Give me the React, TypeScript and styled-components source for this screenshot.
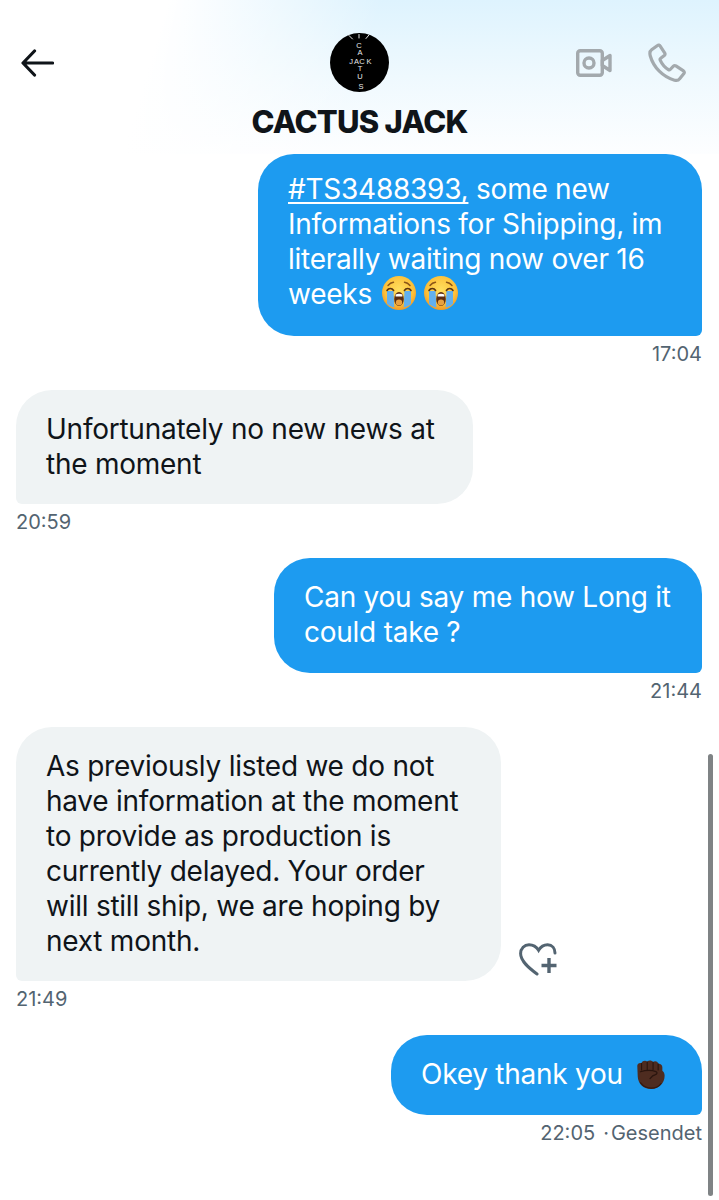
import React from 'react';
import styled, { createGlobalStyle } from 'styled-components';

const GlobalStyle = createGlobalStyle`
  html, body {
    margin: 0;
    padding: 0;
    background: #fff;
  }
  * {
    box-sizing: border-box;
  }
`;

const Screen = styled.div`
  position: relative;
  width: 719px;
  height: 1200px;
  overflow: hidden;
  background: #fff;
  font-family: Inter, 'Noto Sans', sans-serif;
  color: #0f1419;
`;

const Header = styled.header`
  height: 154px;
  display: grid;
  grid-template-columns: 1fr auto 1fr;
  padding: 33px 21px 0;
  background:
    linear-gradient(107deg, #ffffff 22%, rgba(255, 255, 255, 0) 50%),
    linear-gradient(180deg, #def3fe 0%, #eff9fe 50%, #fdfeff 100%);
`;

const BackButton = styled.div`
  height: 59px;
  display: flex;
  align-items: center;
`;

const Profile = styled.div`
  display: flex;
  flex-direction: column;
  align-items: center;
`;

const Avatar = styled.svg`
  width: 59px;
  height: 59px;
  display: block;
`;

const Name = styled.h1`
  margin: 11px 0 0;
  font-size: 31px;
  line-height: 38px;
  font-weight: 800;
  letter-spacing: -0.75px;
  white-space: nowrap;
  color: #0f1419;
`;

const Actions = styled.div`
  height: 59px;
  display: flex;
  align-items: center;
  justify-content: flex-end;
  gap: 36px;
  padding-right: 12px;
`;

const Thread = styled.main`
  display: flex;
  flex-direction: column;
  padding: 0 17px 0 16px;
`;

const Group = styled.section<{ $mine?: boolean }>`
  display: flex;
  flex-direction: column;
  align-items: ${(p) => (p.$mine ? 'flex-end' : 'flex-start')};
  margin-bottom: 24px;
`;

const BubbleRow = styled.div`
  display: flex;
  align-items: flex-end;
`;

const Bubble = styled.div<{ $mine?: boolean; $clipped?: boolean; $narrow?: boolean; $width: number }>`
  width: ${(p) => p.$width}px;
  padding: ${(p) => (p.$clipped ? '17.5px' : '22px')} ${(p) => (p.$narrow ? '36px' : '20px')}
    ${(p) => (p.$clipped ? '24px' : '22.5px')} 30px;
  font-size: 28px;
  line-height: 35px;
  letter-spacing: -0.25px;
  border-radius: ${(p) => (p.$mine ? '36px 36px 6px 36px' : '36px 36px 36px 6px')};
  background: ${(p) => (p.$mine ? '#1d9bf0' : '#eff3f4')};
  color: ${(p) => (p.$mine ? '#fff' : '#0f1419')};
`;

const OrderLink = styled.span`
  text-decoration: underline;
  text-decoration-thickness: 2px;
  text-decoration-skip-ink: none;
  text-underline-offset: 3px;
`;

const Emoji = styled.svg<{ $gap: number; $size: number }>`
  display: inline-block;
  width: ${(p) => p.$size}px;
  height: ${(p) => p.$size}px;
  margin: -8px 0 -8px ${(p) => p.$gap}px;
  vertical-align: 2px;
`;

const Meta = styled.div`
  margin-top: 6px;
  font-size: 20px;
  line-height: 24px;
  color: #536471;
`;

const MetaDot = styled.span`
  margin: 0 2px 0 8px;
`;

const ReactButton = styled.div`
  display: flex;
  margin: 0 0 5px 18px;
`;

const ScrollThumb = styled.div`
  position: absolute;
  left: 708px;
  top: 754px;
  width: 5px;
  height: 442px;
  border-radius: 3px;
  background: #7f8385;
`;

const ArrowIcon = () => (
  <svg width="33" height="28" viewBox="0 0 33 28" fill="none" stroke="#0f1419" strokeWidth="3.2" strokeLinecap="round" strokeLinejoin="round">
    <path d="M13.5 2 2 14l11.5 12M2.500 14H31.500" />
  </svg>
);

const VideoIcon = () => (
  <svg width="36" height="28" viewBox="0 0 36 28" fill="none" stroke="#a3a9ad" strokeWidth="3.4" strokeLinejoin="round">
    <rect x="1.700" y="1.700" width="24.600" height="24.600" rx="2.500" />
    <circle cx="13" cy="14" r="5" />
    <path d="M26.300 11.500 34 6.500V21.500L26.300 16.500Z" />
  </svg>
);

const PhoneIcon = () => (
  <svg width="38" height="40" viewBox="0 0 38 40" fill="none" stroke="#a3a9ad" strokeWidth="3.2" strokeLinejoin="round">
    <path d="M9.500 2.500 3.600 6.800C1.900 8 1.600 10.500 2.300 13 5.500 24.500 15 34 26.500 37.200c2 .5 4 .2 5-1.300l4.400-5.300c.7-.9.5-2-.4-2.700l-7.600-5c-.8-.5-1.800-.4-2.500.3l-3.200 3.300c-.5.5-1.200.6-1.800.2-3.400-2.200-6.600-6-8.200-9.600-.3-.7-.1-1.400.5-1.800l3.600-2.800c.7-.6.9-1.500.5-2.300L12.200 3.200c-.5-1.100-1.800-1.400-2.700-.7Z" />
  </svg>
);

const HeartPlusIcon = () => (
  <svg width="38" height="33" viewBox="0 0 38 33" fill="none" stroke="#536471" strokeWidth="3" strokeLinecap="round">
    <path d="M18 31C10.500 25.500 1.600 18.500 1.600 10.600 1.600 5.400 5.400 1.700 10 1.700c4.300 0 7.500 2.200 9.600 5.600 2-3.400 5-5.600 9-5.600 4.600 0 7.400 3.600 7.400 8.400" />
    <path d="M30 15v15M22.500 22.500h15" strokeLinecap="butt" strokeWidth="3.400" />
  </svg>
);

const CryingEmoji = ({ id, gap }: { id: string; gap: number }) => (
  <Emoji $gap={gap} $size={34} viewBox="0 0 34 34">
    <defs>
      <radialGradient id={id} cx="0.5" cy="0.4" r="0.65">
        <stop offset="0" stopColor="#ffdf5e" />
        <stop offset="0.65" stopColor="#fdc13a" />
        <stop offset="1" stopColor="#ef8f1c" />
      </radialGradient>
    </defs>
    <circle cx="17" cy="17" r="17" fill={`url(#${id})`} />
    <path d="M5 15h6.500l.8 16.400C9.400 31 6.500 29.500 5 27.500Z" fill="#62b0ee" />
    <path d="M29 15h-6.500l-.8 16.400c2.900-.4 5.800-1.900 7.300-3.900Z" fill="#62b0ee" />
    <path d="M5 14.500c1.600-2.600 5-2.600 6.600 0M22.400 14.500c1.600-2.600 5-2.600 6.600 0" fill="none" stroke="#5b3410" strokeWidth="1.600" strokeLinecap="round" />
    <path d="M6 9.500c1.700-2 3.500-2.900 5.500-3.200M28 9.500c-1.700-2-3.500-2.900-5.500-3.200" fill="none" stroke="#8a5417" strokeWidth="1.400" strokeLinecap="round" />
    <ellipse cx="17" cy="23" rx="4.800" ry="7" fill="#5b2c12" />
    <ellipse cx="17" cy="26.500" rx="3.200" ry="3" fill="#e9a13f" />
    <path d="M13.600 18.500c2-1 4.800-1 6.800 0v2h-6.800Z" fill="#fff" />
  </Emoji>
);

const FistEmoji = () => (
  <Emoji $gap={12} $size={31} viewBox="0 0 34 34">
    <path d="M2.500 7.500C2.500 5 5 3.700 7.200 4.600 8 2 11.500 1.200 13.400 3c1.600-1.800 5-1.800 6.400.4 1.800-1.500 5-1 5.600 1.800 2.200-.4 4.600 1 4.600 3.800v4c1.600 1.300 2.500 3 2.500 5.500 0 8-6.500 14.500-15 14.500S3.500 27 3 19.500Z" fill="#4e2c20" />
    <path d="M7.200 4.800V12M13.400 3.200V11.500M19.800 3.600V11.500M25.400 5.300V12" stroke="#2a150e" strokeWidth="1.200" fill="none" strokeLinecap="round" />
    <path d="M6 14c5-1.600 12-2 17-.2 1.800.7 1.300 3-.5 3.300-3 .5-4.500 2.300-6 4.400" stroke="#2a150e" strokeWidth="1.400" fill="none" strokeLinecap="round" />
    <path d="M6 26c3 4 8 6 12 6 4 0 8-1.500 10.500-5" stroke="#36190f" strokeWidth="1.400" fill="none" strokeLinecap="round" />
  </Emoji>
);

const LogoMark = () => (
  <Avatar viewBox="0 0 59 59">
    <circle cx="29.500" cy="29.500" r="29.500" fill="#000" />
    <g stroke="#e8e8e8" strokeWidth="1" strokeLinecap="round">
      <path d="M29 1.500v3.500M19 2.500l3.500 3.500M39 2l-3 3.500" />
    </g>
    <g fill="#e8e8e8" fontFamily="'Liberation Sans', sans-serif" fontSize="7.500" textAnchor="middle">
      <text x="29" y="15">C</text>
      <text x="30" y="22">A</text>
      <text x="21" y="31">J</text>
      <text x="26.500" y="31">A</text>
      <text x="32" y="31">C</text>
      <text x="39" y="31">K</text>
      <text x="30" y="38">T</text>
      <text x="30" y="46">U</text>
      <text x="31" y="56">S</text>
    </g>
  </Avatar>
);

export default function App() {
  return (
    <Screen>
      <GlobalStyle />
      <Header>
        <BackButton>
          <ArrowIcon />
        </BackButton>
        <Profile>
          <LogoMark />
          <Name>CACTUS JACK</Name>
        </Profile>
        <Actions>
          <VideoIcon />
          <PhoneIcon />
        </Actions>
      </Header>
      <Thread>
        <Group $mine>
          <Bubble $mine $clipped $width={444}>
            <OrderLink>#TS3488393,</OrderLink> some new Informations for Shipping, im literally waiting now over 16 weeks
            <CryingEmoji id="cry-a" gap={10} />
            <CryingEmoji id="cry-b" gap={8} />
          </Bubble>
          <Meta>17:04</Meta>
        </Group>
        <Group>
          <Bubble $width={457}>Unfortunately no new news at the moment</Bubble>
          <Meta>20:59</Meta>
        </Group>
        <Group $mine>
          <Bubble $mine $width={428}>Can you say me how Long it could take ?</Bubble>
          <Meta>21:44</Meta>
        </Group>
        <Group>
          <BubbleRow>
            <Bubble $narrow $width={485}>
              As previously listed we do not have information at the moment to provide as production is currently delayed. Your order will still ship, we are hoping by next month.
            </Bubble>
            <ReactButton>
              <HeartPlusIcon />
            </ReactButton>
          </BubbleRow>
          <Meta>21:49</Meta>
        </Group>
        <Group $mine>
          <Bubble $mine $width={311}>
            Okey thank you
            <FistEmoji />
          </Bubble>
          <Meta>
            22:05<MetaDot>·</MetaDot>Gesendet
          </Meta>
        </Group>
      </Thread>
      <ScrollThumb />
    </Screen>
  );
}
